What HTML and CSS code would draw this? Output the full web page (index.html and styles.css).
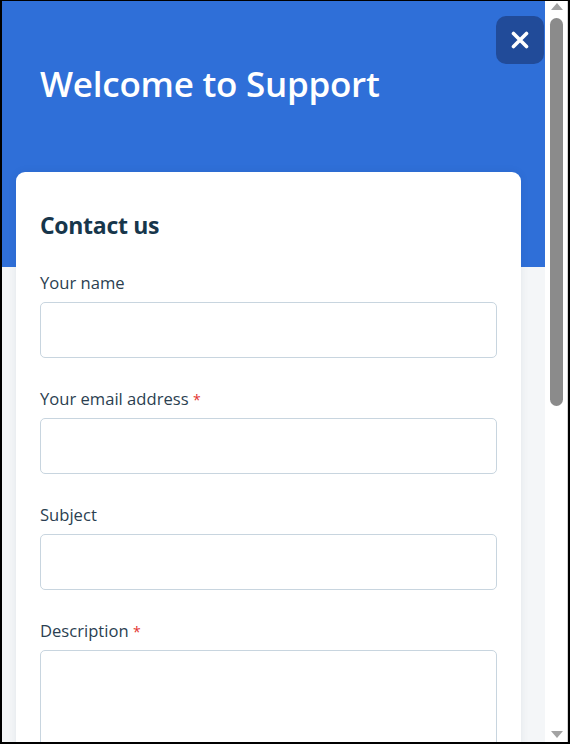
FILE: index.html
```html
<!DOCTYPE html>
<html lang="en">
<head>
<meta charset="utf-8">
<title>Welcome to Support</title>
<link rel="stylesheet" href="styles.css">
</head>
<body>
<div class="frame">
  <main class="main">
    <header class="hero">
      <h1 class="hero-title">Welcome to Support</h1>
      <button class="close-btn" aria-label="Close">
        <svg width="18" height="18" viewBox="0 0 18 18"><path d="M2.5 2.5 L15.5 15.5 M15.5 2.5 L2.5 15.5" stroke="#fff" stroke-width="3.6" stroke-linecap="round" fill="none"/></svg>
      </button>
    </header>
    <section class="card">
      <h2 class="card-title">Contact us</h2>
      <div class="field">
        <label class="label">Your name</label>
        <input class="input" type="text">
      </div>
      <div class="field">
        <label class="label">Your email address <span class="req">*</span></label>
        <input class="input" type="email">
      </div>
      <div class="field">
        <label class="label">Subject</label>
        <input class="input" type="text">
      </div>
      <div class="field">
        <label class="label">Description <span class="req">*</span></label>
        <textarea class="input textarea"></textarea>
      </div>
    </section>
  </main>
  <div class="scrollbar">
    <div class="arrow arrow-up"></div>
    <div class="thumb"></div>
    <div class="spacer"></div>
    <div class="arrow arrow-down"></div>
  </div>
</div>
</body>
</html>
```
FILE: styles.css
```css
* { box-sizing: border-box; }
html, body {
  margin: 0;
  padding: 0;
  width: 570px;
  height: 744px;
  overflow: hidden;
  font-family: "Open Sans", "Noto Sans", sans-serif;
}
.frame {
  width: 570px;
  height: 744px;
  display: flex;
  border-top: 1px solid #000;
  border-left: 2px solid #000;
  border-right: 2px solid #000;
  border-bottom: 2px solid #000;
  background: #fff;
}
.main {
  position: relative;
  width: 543px;
  height: 100%;
  overflow: hidden;
  background: linear-gradient(#2f6fd8 0, #2f6fd8 266px, #f4f6f8 266px);
}
.hero {
  padding: 61px 40px 0 38px;
  height: 171px;
}
.hero-title {
  margin: 0;
  color: #fff;
  font-size: 35px;
  font-weight: 600;
  line-height: 43px;
  letter-spacing: -0.25px;
}
.close-btn {
  position: absolute;
  top: 15px;
  right: 1px;
  width: 48px;
  height: 48px;
  border: 0;
  border-radius: 10px;
  background: #214b99;
  display: flex;
  align-items: center;
  justify-content: center;
  padding: 0;
}
.card {
  margin-left: 14px;
  width: 505px;
  background: #fff;
  border-radius: 9px;
  box-shadow: 0 0 8px rgba(30, 50, 80, 0.08);
  padding: 39px 24px 40px;
  display: flex;
  flex-direction: column;
}
.card-title {
  margin: 0 0 31px;
  font-size: 23px;
  line-height: 29px;
  font-weight: 700;
  color: #17364b;
  letter-spacing: -0.3px;
}
.field {
  display: flex;
  flex-direction: column;
  margin-bottom: 29px;
}
.label {
  font-size: 16.6px;
  line-height: 24px;
  height: 24px;
  color: #2b3f51;
  margin-bottom: 7px;
}
.req {
  color: #e3342f;
  font-size: 14px;
  line-height: 1;
}
.input {
  height: 56px;
  border: 1px solid #c8d5df;
  border-radius: 5px;
  background: #fff;
  font: inherit;
  width: 100%;
}
.textarea {
  height: 140px;
  resize: none;
}
.scrollbar {
  width: 23px;
  height: 100%;
  background: #fff;
  border-right: 1px solid #d4d4d4;
  display: flex;
  flex-direction: column;
  align-items: flex-start;
  padding: 2px 0 4px 5px;
}
.arrow {
  width: 0;
  height: 0;
  border-left: 6px solid transparent;
  border-right: 6px solid transparent;
  margin-left: 0.5px;
}
.arrow-up {
  border-bottom: 7px solid #a3a3a3;
}
.arrow-down {
  border-top: 7px solid #a3a3a3;
}
.thumb {
  margin-top: 8px;
  width: 13px;
  height: 388px;
  border-radius: 7px;
  background: #8b8b8b;
}
.spacer { flex: 1; }
```
